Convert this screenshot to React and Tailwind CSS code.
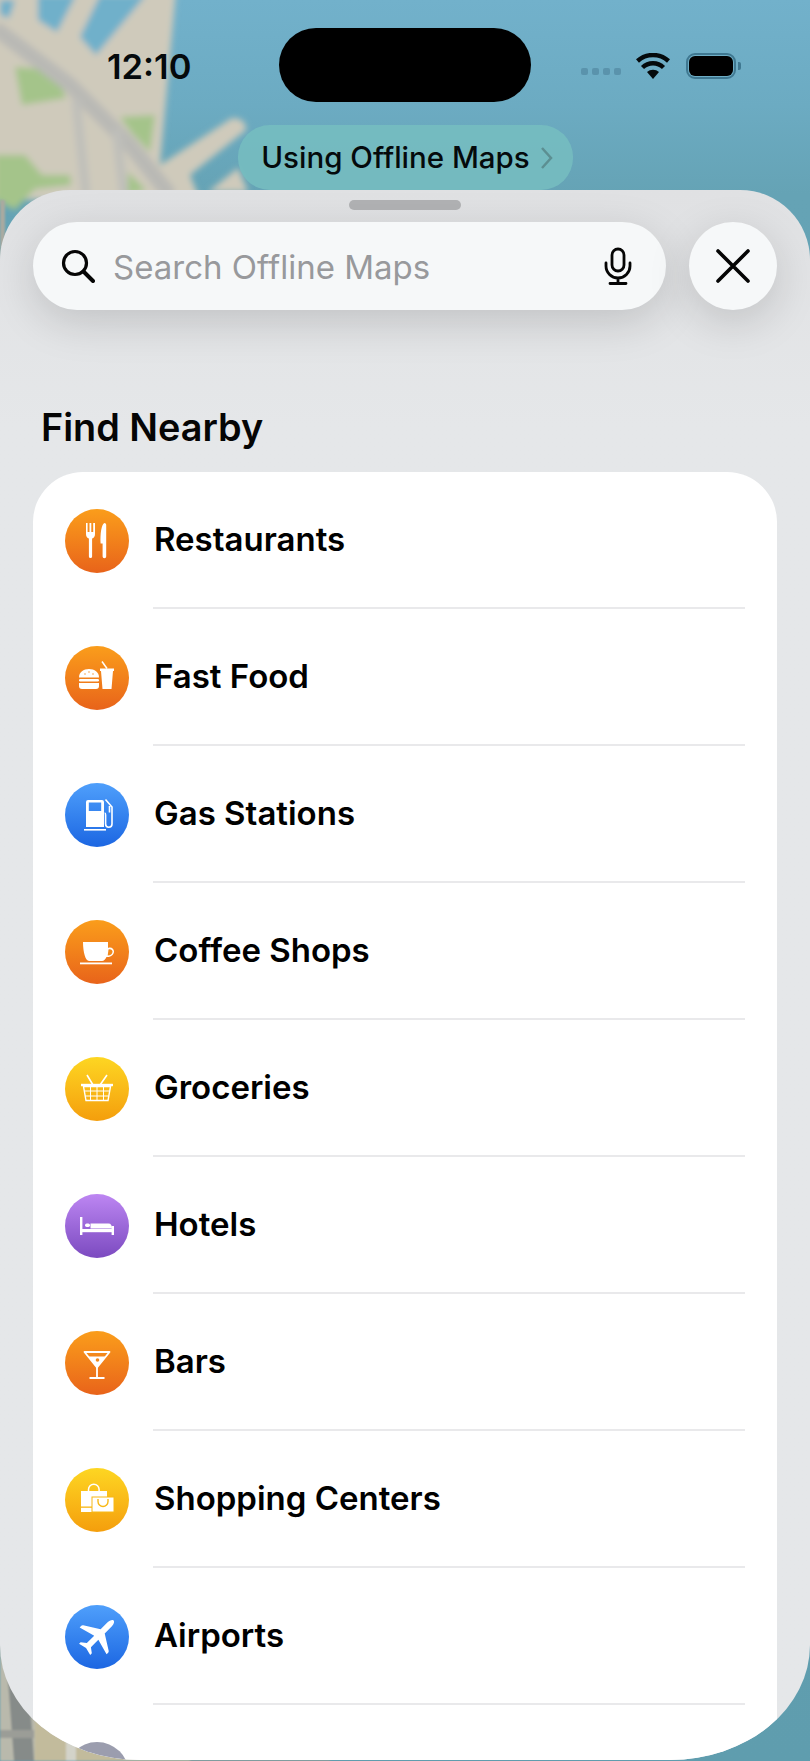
const F = { fontFamily: 'Inter, "Liberation Sans", sans-serif' };

function MapBg() {
  return (
    <svg className="absolute inset-0" width="810" height="1761" viewBox="0 0 810 1761">
      <defs>
        <linearGradient id="water" x1="0" y1="0" x2="0" y2="1761" gradientUnits="userSpaceOnUse">
          <stop offset="0" stopColor="#72b1cb" />
          <stop offset="0.06" stopColor="#6cabc2" />
          <stop offset="0.11" stopColor="#65a3b5" />
          <stop offset="1" stopColor="#5f9dae" />
        </linearGradient>
        <filter id="soft"><feGaussianBlur stdDeviation="3" /></filter>
        <filter id="softer"><feGaussianBlur stdDeviation="0.8" /></filter>
      </defs>
      <rect width="810" height="1761" fill="url(#water)" />
      <g filter="url(#soft)">
        <path d="M-10 -10H176L160 165L232 118Q246 118 246 130L190 175L200 200H-10Z" fill="#cfcabb" />
        <path d="M208 192L238 168L248 192Z" fill="#cfcabb" />
        <path d="M0 0H15L9 18L0 15Z M38 -5H76L57 32L38 20Z M100 -5H146L96 55L80 37Z" fill="#70b0ca" />
        <path d="M15 67L55 70L66 98L22 105Z M120 117L155 115L150 152L132 133Z M-5 155L25 155L42 175L70 175L71 185L35 189L15 210L-5 200Z M128 172L146 190L128 195Z" fill="#a4c48a" />
        <path d="M-5 28L70 85L130 145L170 195" fill="none" stroke="#b9b9b5" strokeWidth="15" />
        <path d="M76 100L86 195M116 130L124 195" fill="none" stroke="#bfbfba" strokeWidth="9" />
      </g>
      <g filter="url(#softer)">
        <path d="M0 200H5V260H0Z" fill="#a9aaa0" />
        <path d="M0 1560H60V1761H0Z" fill="#b9b9ac" />
        <path d="M35 1700H190V1761H35Z" fill="#c2bb9c" />
        <path d="M0 1590L14 1640L30 1700L34 1761H14L8 1680L0 1640Z" fill="#868b89" />
        <path d="M0 1730H34V1738H0Z" fill="#9b9d97" />
        <path d="M66 1725H76V1761H66Z" fill="#d3d3c9" />
        <path d="M190 1755H330V1761H190Z" fill="#8f9c98" />
      </g>
    </svg>
  );
}

function Restaurant() {
  return (
    <g fill="#fff">
      <path d="M21 14h1.600v9h1.900v-9h1.800v9h1.900v-9H30v11c0 2.600-1.200 4-2.900 4.600V47.500a1.600 1.600 0 0 1-3.200 0V29.600C22.200 29 21 27.600 21 25z" />
      <path d="M39.500 14c1.200 0 1.700 1 1.700 2v31.500a1.800 1.800 0 0 1-3.600 0V34.500H35.600C35 25 36.500 15 39.500 14z" />
    </g>
  );
}
function Burger() {
  return (
    <g fill="#fff">
      <path d="M14 31.500c0-5.500 4.500-8.500 10-8.500s10 3 10 8.500z" />
      <rect x="14" y="33" width="20" height="2.500" rx="1.200" />
      <path d="M14 37h20v3a3 3 0 0 1-3 3H17a3 3 0 0 1-3-3z" />
      <path d="M35 22.500h14v2.500h-1l-1.500 18h-9L36 25h-1z" />
      <path d="M37 15.500l5 7" stroke="#fff" strokeWidth="1.500" fill="none" />
      <g fill="#f4891b">
        <circle cx="20" cy="28" r=".7" /><circle cx="24" cy="26" r=".7" /><circle cx="28" cy="28" r=".7" />
      </g>
    </g>
  );
}
function Gas() {
  return (
    <g fill="#fff">
      <path fillRule="evenodd" d="M23 17h14a2 2 0 0 1 2 2v25H21V19a2 2 0 0 1 2-2zm.8 2.500v8.500h12.400v-8.500z" />
      <rect x="19" y="46" width="22" height="1.600" />
      <path d="M40.500 16.500L47 24v17a3.200 3.200 0 0 1-6.400 0v-9c0-1.500-.600-2-1-2M44.500 29.500V23" fill="none" stroke="#fff" strokeWidth="1.600" />
    </g>
  );
}
function Coffee() {
  return (
    <g fill="#fff">
      <path d="M18 22h25v6c3-1.500 6 .500 6 3.500s-3 6-7.500 5.500c-1 2-2.500 4-4.500 4H24c-3.500 0-6-9-6-19z" />
      <path d="M43.500 29.500c2-.800 4 .200 4 2.200s-2 3.800-4.800 3.800z" fill="#f38a1b" />
      <rect x="15" y="42.500" width="32" height="1.800" />
    </g>
  );
}
function Basket() {
  return (
    <g stroke="#fff" fill="none">
      <path d="M22 18l6 10M42 18l-7 10" strokeWidth="1.600" />
      <path d="M16 28h32" strokeWidth="2.400" />
      <path d="M18.500 29.500l2.500 14h22l2.500-14z" strokeWidth="1.400" />
      <path d="M19.500 34h25M20.300 39h23.400M25.500 29.500v14M32 29.500v14M38.500 29.500v14" strokeWidth="1" />
    </g>
  );
}
function Bed() {
  return (
    <g fill="#fff">
      <rect x="15" y="23" width="2.400" height="18" />
      <rect x="46.600" y="32" width="2.400" height="9" />
      <rect x="15" y="35" width="34" height="3.200" />
      <path d="M25.500 34.500v-5h18c2.500 0 3.500 2 3.500 5z" />
      <rect x="20" y="29.500" width="5" height="3.500" rx="1.700" />
    </g>
  );
}
function Martini() {
  return (
    <g>
      <path d="M19.500 21h25L32 36.500z" fill="none" stroke="#fff" strokeWidth="1.800" strokeLinejoin="round" />
      <path d="M23.500 25.500h17L32 36.500z" fill="#fff" />
      <circle cx="32.500" cy="29" r="1.800" fill="#f3891b" />
      <path d="M32 36v11M24.500 47h15" stroke="#fff" strokeWidth="1.800" fill="none" />
    </g>
  );
}
function Bags() {
  return (
    <g>
      <path d="M16 23h26v6H27v15H16z" fill="#fff" />
      <path d="M23.500 23v-1.500a5.300 5.300 0 0 1 10.600 0V23" fill="none" stroke="#fff" strokeWidth="1.500" />
      <rect x="16" y="38.500" width="11" height="1.300" fill="#f8b814" />
      <rect x="27" y="29" width="22" height="15" fill="#fff" stroke="#f8b814" strokeWidth="1" />
      <path d="M33 31v2.500a5 5 0 0 0 10 0V31" fill="none" stroke="#f8b814" strokeWidth="1.400" />
    </g>
  );
}
function Plane() {
  return (
    <path
      transform="rotate(45 32 32)"
      fill="#fff"
      d="M32 8.500c1.800 0 2.900 3 2.900 6v9.500L50 33.500c.600.400 1 1 1 1.700v2.300L34.900 33v10.500l5 3.700v2.300l-7.900-2-7.900 2v-2.300l5-3.700V33L13 37.500v-2.300c0-.700.400-1.300 1-1.700l15.100-9.500v-9.500c0-3 1.100-6 2.900-6z"
    />
  );
}

const rows = [
  ['Restaurants', 'bg-linear-to-b from-[#fa9d1b] to-[#e8631a]', Restaurant],
  ['Fast Food', 'bg-linear-to-b from-[#fa9d1b] to-[#e8631a]', Burger],
  ['Gas Stations', 'bg-linear-to-b from-[#4f9ffb] to-[#1c66e2]', Gas],
  ['Coffee Shops', 'bg-linear-to-b from-[#fa9d1b] to-[#e8631a]', Coffee],
  ['Groceries', 'bg-linear-to-b from-[#fdd622] to-[#f49e0c]', Basket],
  ['Hotels', 'bg-linear-to-b from-[#bd86f2] to-[#7c4ac0]', Bed],
  ['Bars', 'bg-linear-to-b from-[#fa9d1b] to-[#e8631a]', Martini],
  ['Shopping Centers', 'bg-linear-to-b from-[#fdd622] to-[#f49e0c]', Bags],
  ['Airports', 'bg-linear-to-b from-[#4f9ffb] to-[#1c66e2]', Plane],
  ['Banks and ATMs', 'bg-[#9b9dae]', null],
];

function Row({ label, bg, Icon }) {
  return (
    <div className="flex h-[137px] items-center gap-[24px] px-[32px]">
      <div className={`h-[64px] w-[64px] shrink-0 rounded-full ${bg}`}>
        <svg width="64" height="64" viewBox="0 0 64 64">{Icon ? <Icon /> : null}</svg>
      </div>
      <div className="flex h-full flex-1 items-center border-b-2 border-[#e9e9eb] pl-px text-[33px] font-semibold text-black">
        {label}
      </div>
    </div>
  );
}

export default function App() {
  return (
    <div className="relative h-[1761px] w-[810px] overflow-hidden" style={F}>
      <MapBg />
      <div className="relative flex h-full flex-col pb-px">
        <div className="grid grid-cols-[279px_252px_1fr] pt-[28px]">
          <div className="flex h-[74px] items-center pl-[107px] pt-[4px] text-[34.5px] font-semibold text-[#050a0c]">12:10</div>
          <div className="h-[74px] rounded-full bg-black" />
          <div className="flex h-[74px] items-center pl-[50px]">
            <div className="mt-[12px] flex gap-[4px]">
              <span className="h-[7px] w-[7px] rounded-[2px] bg-[#5a93ac]" />
              <span className="h-[7px] w-[7px] rounded-[2px] bg-[#5a93ac]" />
              <span className="h-[7px] w-[7px] rounded-[2px] bg-[#5a93ac]" />
              <span className="h-[7px] w-[7px] rounded-[2px] bg-[#5a93ac]" />
            </div>
            <svg className="ml-[15px] mt-[1px]" width="34" height="26" viewBox="0 0 34 26">
              <path d="M17 26l-6-7a9 9 0 0 1 12 0z" fill="#050a0c" />
              <path d="M6.500 14.500a15 15 0 0 1 21 0M1.500 8a23 23 0 0 1 31 0" fill="none" stroke="#050a0c" strokeWidth="4.400" />
            </svg>
            <div className="ml-[16px] mt-[1px] flex h-[26px] w-[50px] items-center justify-center rounded-[9px] border-2 border-[#3f7891]">
              <div className="h-[20px] w-[44px] rounded-[6px] bg-black" />
            </div>
            <div className="ml-[2px] mt-[1px] h-[8px] w-[3px] rounded-r-[2px] bg-[#3f7891]" />
          </div>
        </div>

        <div className="mx-auto mt-[23px] flex h-[65px] w-[335px] items-center justify-center gap-[10px] rounded-[32px] bg-[#76bdc0]/90 pl-[4px]">
          <span className="text-[29.5px] font-medium text-[#050a0c]">Using Offline Maps</span>
          <svg width="13" height="24" viewBox="0 0 13 24">
            <path d="M2 2l9 10-9 10" fill="none" stroke="#5c8f92" strokeWidth="2.500" />
          </svg>
        </div>

        <div className="flex min-h-0 flex-1 flex-col overflow-hidden rounded-t-[70px] rounded-b-[140px_115px] bg-linear-to-b from-[#e0e1e3] to-[#e5e7e9] to-[15%]">
          <div className="mx-auto mt-[10px] h-[10px] w-[112px] shrink-0 rounded-full bg-[#b1b2b4]" />
          <div className="mt-[12px] flex shrink-0 gap-[23px] px-[33px]">
            <div className="flex h-[88px] flex-1 items-center rounded-full bg-[#f6f8f9] pl-[28px] pr-[34px] shadow-[0_12px_44px_rgba(0,0,0,0.15)]">
              <svg width="34" height="34" viewBox="0 0 34 34">
                <circle cx="14" cy="14" r="11.500" fill="none" stroke="#050505" strokeWidth="3.200" />
                <path d="M22.500 22.500L32 32" stroke="#050505" strokeWidth="4" strokeLinecap="round" />
              </svg>
              <span className="ml-[18px] flex-1 pt-[3px] text-[33px] text-[#98999c]">Search Offline Maps</span>
              <svg width="28" height="38" viewBox="0 0 28 38">
                <rect x="8" y="2" width="12" height="22" rx="6" fill="none" stroke="#050505" strokeWidth="2.800" />
                <path d="M2 16v3a12 12 0 0 0 24 0v-3M14 31v5M6 36.500h16" fill="none" stroke="#050505" strokeWidth="2.800" strokeLinecap="round" />
              </svg>
            </div>
            <div className="flex h-[88px] w-[88px] shrink-0 items-center justify-center rounded-full bg-[#f6f8f9] shadow-[0_12px_44px_rgba(0,0,0,0.15)]">
              <svg width="36" height="36" viewBox="0 0 36 36">
                <path d="M3 3L33 33M33 3L3 33" stroke="#050505" strokeWidth="3.600" strokeLinecap="round" />
              </svg>
            </div>
          </div>
          <div className="mt-[93px] h-[48px] shrink-0 pl-[41px] text-[37.8px] font-semibold leading-[48px] text-[#050505]">Find Nearby</div>
          <div className="mx-[33px] mt-[21px] shrink-0 rounded-t-[50px] bg-white">
            {rows.map(([label, bg, Icon]) => (
              <Row key={label} label={label} bg={bg} Icon={Icon} />
            ))}
          </div>
        </div>
      </div>
    </div>
  );
}
